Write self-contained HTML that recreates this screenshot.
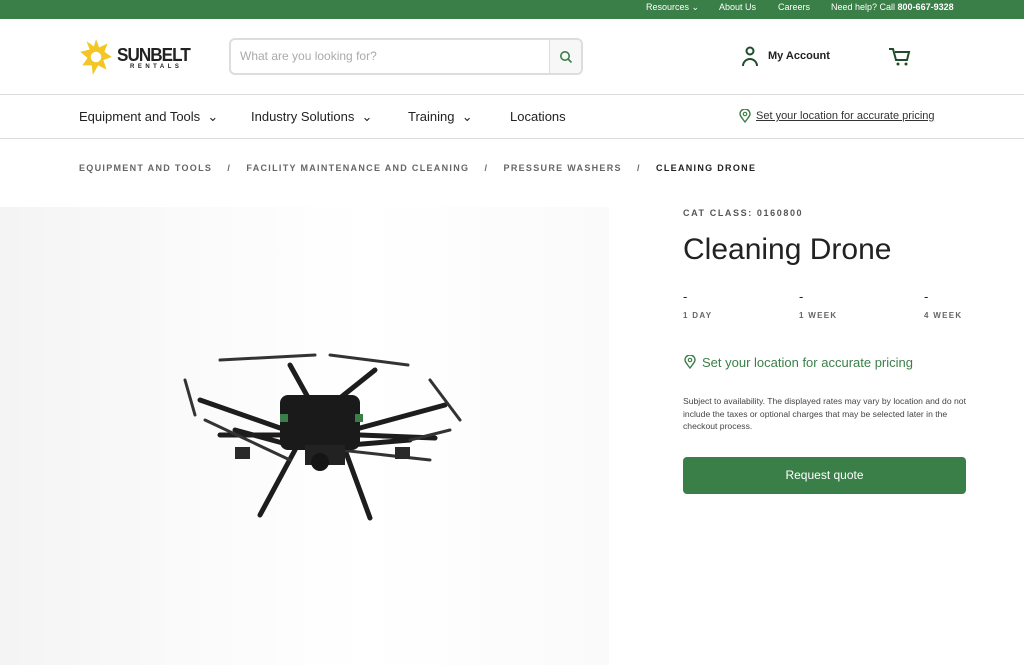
<!DOCTYPE html>
<html><head><meta charset="utf-8"><style>
*{margin:0;padding:0;box-sizing:border-box}
body{width:1024px;height:665px;overflow:hidden;background:#fff;font-family:"Liberation Sans",sans-serif;color:#222;position:relative}
.a{position:absolute;white-space:nowrap}
.top{position:absolute;left:0;top:0;width:1024px;height:19px;background:#3b7f48;color:#fff;font-size:9px}
.crumb{font-size:9px;letter-spacing:1.3px;color:#666;font-weight:bold}
</style></head><body>
<div class="top">
<span class="a" style="left:646px;top:2px">Resources ⌄</span>
<span class="a" style="left:719px;top:2px">About Us</span>
<span class="a" style="left:778px;top:2px">Careers</span>
<span class="a" style="left:831px;top:2px">Need help? Call <b>800-667-9328</b></span>
</div>
<svg class="a" style="left:79px;top:37px" width="34" height="40" viewBox="0 0 30 38"><polygon points="15,2 18,10 26,6 23,14 30,19 22,22 25,31 17,27 12,36 11,27 2,27 7,20 0,14 9,12 6,4 13,9" fill="#f3c623"/><circle cx="15" cy="19" r="5" fill="#fff"/></svg>
<div class="a" style="left:117px;top:45px;font-size:18px;font-weight:900;letter-spacing:-1px;color:#222;transform:scaleX(0.95);transform-origin:left">SUNBELT</div>
<div class="a" style="left:130px;top:64px;font-size:6px;font-weight:bold;letter-spacing:3.5px">RENTALS</div>
<div class="a" style="left:229px;top:38px;width:354px;height:37px;border:2px solid #ddd;border-radius:6px"></div>
<div class="a" style="left:549px;top:40px;width:1px;height:33px;background:#ddd"></div>
<div class="a" style="left:550px;top:40px;width:31px;height:33px;background:#f7f7f7;border-radius:0 5px 5px 0"></div>
<svg class="a" style="left:559px;top:50px" width="14" height="14" viewBox="0 0 14 14"><circle cx="6" cy="6" r="4.2" fill="none" stroke="#3b7f48" stroke-width="1.6"/><path d="M9 9l3.5 3.5" stroke="#3b7f48" stroke-width="1.6"/></svg>
<div class="a" style="left:240px;top:49px;font-size:12px;color:#aaa">What are you looking for?</div>
<svg class="a" style="left:740px;top:46px" width="20" height="22" viewBox="0 0 20 22"><circle cx="10" cy="5" r="3.5" fill="none" stroke="#1f4d2a" stroke-width="2"/><path d="M3 20a7 7 0 0 1 14 0" fill="none" stroke="#1f4d2a" stroke-width="2"/></svg>
<div class="a" style="left:768px;top:50px;font-size:11px;font-weight:bold">My Account</div>
<svg class="a" style="left:888px;top:47px" width="24" height="20" viewBox="0 0 24 20"><path d="M1 2h4l3 11h11l2-8H7" fill="none" stroke="#1f4d2a" stroke-width="2"/><circle cx="10" cy="17" r="1.5" fill="#1f4d2a"/><circle cx="18" cy="17" r="1.5" fill="#1f4d2a"/></svg>
<div class="a" style="left:0;top:94px;width:1024px;height:1px;background:#ddd"></div>
<div class="a" style="left:0;top:138px;width:1024px;height:1px;background:#ddd"></div>
<div class="a" style="left:79px;top:109px;font-size:13px;color:#222">Equipment and Tools &nbsp;⌄</div>
<div class="a" style="left:251px;top:109px;font-size:13px">Industry Solutions &nbsp;⌄</div>
<div class="a" style="left:408px;top:109px;font-size:13px">Training &nbsp;⌄</div>
<div class="a" style="left:510px;top:109px;font-size:13px">Locations</div>
<svg class="a" style="left:739px;top:109px" width="12" height="14" viewBox="0 0 12 14"><path d="M6 13C2 8 1 6.5 1 5a5 5 0 0 1 10 0c0 1.5-1 3-5 8z" fill="none" stroke="#3b7f48" stroke-width="1.4"/><circle cx="6" cy="5" r="1.7" fill="none" stroke="#3b7f48" stroke-width="1.2"/></svg>
<div class="a" style="left:756px;top:110px;font-size:11px;text-decoration:underline;color:#333">Set your location for accurate pricing</div>
<div class="a crumb" style="left:79px;top:163px">EQUIPMENT AND TOOLS &nbsp;&nbsp;&nbsp;/&nbsp;&nbsp;&nbsp; FACILITY MAINTENANCE AND CLEANING &nbsp;&nbsp;&nbsp;/&nbsp;&nbsp;&nbsp; PRESSURE WASHERS &nbsp;&nbsp;&nbsp;/&nbsp;&nbsp;&nbsp; <span style="color:#222">CLEANING DRONE</span></div>
<div class="a" style="left:0;top:207px;width:609px;height:458px;background:linear-gradient(90deg,#f4f4f4,#fafafa 30%,#fff 60%,#fafafa)"></div>
<svg class="a" style="left:180px;top:350px" width="290" height="175" viewBox="0 0 290 175">
<g stroke="#1d1d1d" stroke-linecap="round" fill="none">
<path d="M100 78L20 50M180 78L265 55M100 85L40 85M180 85L255 88M110 95L55 80M170 95L230 90M115 100L80 165M165 100L190 168M135 60L110 15M145 60L195 20" stroke-width="5"/>
<path d="M40 10L135 5M150 5L228 15M5 30L15 65M250 30L280 70M25 70L110 110M230 90L270 80M160 100L250 110" stroke-width="3" stroke="#333"/>
</g>
<rect x="100" y="45" width="80" height="55" rx="8" fill="#1a1a1a"/>
<rect x="125" y="95" width="40" height="20" fill="#222"/>
<circle cx="140" cy="112" r="9" fill="#151515"/>
<rect x="55" y="97" width="15" height="12" fill="#2a2a2a"/><rect x="215" y="97" width="15" height="12" fill="#2a2a2a"/>
<rect x="100" y="64" width="8" height="8" fill="#3b7f48"/><rect x="175" y="64" width="8" height="8" fill="#3b7f48"/>
</svg>
<div class="a" style="left:683px;top:208px;font-size:9px;letter-spacing:1.6px;font-weight:bold;color:#555">CAT CLASS: 0160800</div>
<div class="a" style="left:683px;top:233px;font-size:30px;color:#222">Cleaning Drone</div>
<div class="a" style="left:683px;top:289px;font-size:13px">-</div>
<div class="a" style="left:799px;top:289px;font-size:13px">-</div>
<div class="a" style="left:924px;top:289px;font-size:13px">-</div>
<div class="a crumb" style="left:683px;top:311px;font-size:8px">1 DAY</div>
<div class="a crumb" style="left:799px;top:311px;font-size:8px">1 WEEK</div>
<div class="a crumb" style="left:924px;top:311px;font-size:8px">4 WEEK</div>
<svg class="a" style="left:684px;top:355px" width="12" height="14" viewBox="0 0 12 14"><path d="M6 13C2 8 1 6.5 1 5a5 5 0 0 1 10 0c0 1.5-1 3-5 8z" fill="none" stroke="#3b7f48" stroke-width="1.4"/><circle cx="6" cy="5" r="1.7" fill="none" stroke="#3b7f48" stroke-width="1.2"/></svg>
<div class="a" style="left:702px;top:355px;font-size:13px;color:#3b7f48">Set your location for accurate pricing</div>
<div class="a" style="left:683px;top:395px;font-size:8.6px;color:#444;line-height:12.5px;white-space:normal;width:286px">Subject to availability. The displayed rates may vary by location and do not include the taxes or optional charges that may be selected later in the checkout process.</div>
<div class="a" style="left:683px;top:457px;width:283px;height:37px;background:#3b7f48;border-radius:4px;color:#fff;font-size:12px;text-align:center;line-height:37px">Request quote</div>
</body></html>
